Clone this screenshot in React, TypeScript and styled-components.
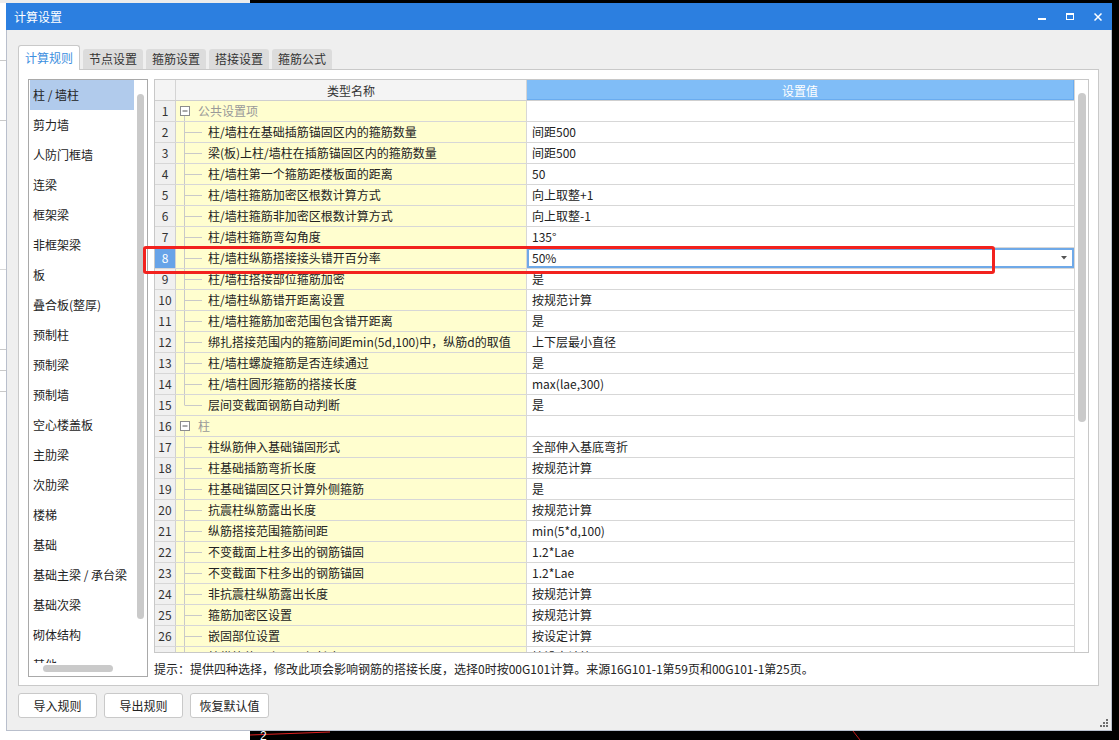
import styled, { createGlobalStyle } from "styled-components";

const GlobalStyle = createGlobalStyle`
  html, body {
    margin: 0;
    padding: 0;
    background: #000;
  }
  body {
    font-family: "Noto Sans CJK SC", "Microsoft YaHei", sans-serif;
    font-size: 12px;
    color: #222;
  }
  * {
    box-sizing: border-box;
  }
`;

const Desktop = styled.div`
  position: relative;
  width: 1119px;
  height: 740px;
  overflow: hidden;
  background: #000;
`;

const BackApp = styled.div`
  position: absolute;
  left: 0;
  top: 0;
  width: 250px;
  height: 740px;
  background: #fff;
  border-top: 3px solid #ececec;
`;

const BackLine = styled.div<{ $top: number; $color?: string }>`
  position: absolute;
  left: 0;
  width: 6px;
  top: ${(p) => p.$top}px;
  height: 1px;
  background: ${(p) => p.$color || "#c9c9c9"};
`;

const CadCanvas = styled.svg`
  position: absolute;
  left: 250px;
  top: 725px;
`;

const Dialog = styled.div`
  position: absolute;
  left: 6px;
  top: 3px;
  width: 1106px;
  height: 728px;
  display: flex;
  flex-direction: column;
`;

const TitleBar = styled.div`
  height: 27px;
  background: #2c7fe0;
  color: #fff;
  display: flex;
  align-items: center;
  padding-left: 8px;
  font-size: 12px;
`;

const TitleText = styled.div`
  flex: 1;
  line-height: 27px;
`;

const WinButton = styled.div`
  width: 28px;
  height: 27px;
  display: flex;
  align-items: center;
  justify-content: center;
`;

const Body = styled.div`
  position: relative;
  flex: 1;
  background: #efefef;
  border: 1px solid #b9bfcc;
  border-top: none;
  padding: 15px 12px 12px 11px;
  display: flex;
  flex-direction: column;
`;

const TabStrip = styled.div`
  display: flex;
  align-items: flex-end;
  gap: 3px;
  height: 24px;
  position: relative;
  z-index: 1;
`;

const Tab = styled.div<{ $active?: boolean }>`
  width: ${(p) => (p.$active ? 62 : 60)}px;
  height: ${(p) => (p.$active ? 25 : 20)}px;
  margin-bottom: ${(p) => (p.$active ? -1 : 0)}px;
  background: ${(p) => (p.$active ? "#fff" : "#dcdcdc")};
  color: ${(p) => (p.$active ? "#3d8fe0" : "#333")};
  border: ${(p) => (p.$active ? "1px solid #c9c9c9" : "none")};
  border-bottom: none;
  border-radius: 3px 3px 0 0;
  display: flex;
  align-items: center;
  justify-content: center;
  line-height: 18px;
`;

const Panel = styled.div`
  height: 617px;
  background: #fff;
  border: 1px solid #c9c9c9;
  padding: 9px 9px 8px 9px;
  display: flex;
  align-items: flex-start;
  gap: 6px;
`;

const List = styled.div`
  width: 120px;
  height: 598px;
  border: 1px solid #a9a9a9;
  display: flex;
  flex-direction: column;
  background: #fff;
`;

const ListBody = styled.div`
  flex: 1;
  min-height: 0;
  display: flex;
`;

const ListItems = styled.div`
  flex: 1;
  overflow: hidden;
  padding-left: 1px;
`;

const ListItem = styled.div<{ $selected?: boolean }>`
  height: 30px;
  line-height: 30px;
  padding-left: 3px;
  white-space: nowrap;
  background: ${(p) => (p.$selected ? "#b1cbec" : "transparent")};
`;

const VScroll = styled.div<{ $pad: number }>`
  width: 13px;
  padding: ${(p) => p.$pad}px 0 0 3px;
`;

const VThumb = styled.div<{ $w: number; $h: number }>`
  width: ${(p) => p.$w}px;
  height: ${(p) => p.$h}px;
  border-radius: 4px;
  background: #cacaca;
`;

const HScroll = styled.div`
  height: 13px;
  padding: 2px 0 0 14px;
`;

const HThumb = styled.div`
  width: 70px;
  height: 7px;
  border-radius: 4px;
  background: #cacaca;
`;

const TableCol = styled.div`
  width: 935px;
  display: flex;
  flex-direction: column;
`;

const Table = styled.div`
  height: 574px;
  border: 1px solid #c8c8c8;
  display: flex;
`;

const Grid = styled.div`
  flex: 1;
  overflow: hidden;
  display: flex;
  flex-direction: column;
`;

const HeaderRow = styled.div`
  flex: none;
  display: grid;
  grid-template-columns: 21px 351px 1fr;
  height: 21px;
  border-bottom: 1px solid #cfcfcf;
`;

const HeadCell = styled.div<{ $blue?: boolean }>`
  display: flex;
  align-items: center;
  justify-content: center;
  background: ${(p) => (p.$blue ? "#80bdf7" : "#f4f4f4")};
  color: ${(p) => (p.$blue ? "#fff" : "#333")};
  border-right: 1px solid ${(p) => (p.$blue ? "#6aacef" : "#d4d4d4")};
  box-shadow: ${(p) => (p.$blue ? "inset 0 -1px 0 #6aacef" : "none")};
`;

const Row = styled.div`
  flex: none;
  display: grid;
  grid-template-columns: 21px 351px 1fr;
  height: 21px;
  border-bottom: 1px solid #d7d7d7;
`;

const NumCell = styled.div<{ $selected?: boolean }>`
  background: ${(p) => (p.$selected ? "#67a3e8" : "#f0f0f0")};
  color: ${(p) => (p.$selected ? "#fff" : "#333")};
  border-right: 1px solid #d0d0d0;
  text-align: center;
  line-height: 20px;
`;

const NameCell = styled.div`
  display: flex;
  align-items: center;
  background: #fffecf;
  border-right: 1px solid #d7d7d7;
  overflow: hidden;
`;

const NameText = styled.span<{ $section?: boolean }>`
  color: ${(p) => (p.$section ? "#999" : "#222")};
  white-space: nowrap;
  line-height: 20px;
`;

const ValueCell = styled.div<{ $editing?: boolean }>`
  display: flex;
  align-items: center;
  justify-content: space-between;
  padding: 0 7px 0 5px;
  line-height: 20px;
  white-space: nowrap;
  background: #fff;
  box-shadow: ${(p) => (p.$editing ? "inset 0 0 0 2px #6fa9e8" : "none")};
`;

const TScroll = styled.div`
  width: 14px;
  border-left: 1px solid #d6d6d6;
  padding: 13px 0 0 3px;
`;

const Hint = styled.div`
  margin-top: 8px;
  line-height: 16px;
  white-space: nowrap;
  color: #222;
`;

const Footer = styled.div`
  display: flex;
  gap: 7px;
  margin-top: 7px;
`;

const Button = styled.button`
  width: 79px;
  height: 25px;
  padding: 0;
  background: #fff;
  border: 1px solid #c9c9c9;
  border-radius: 3px;
  font-family: inherit;
  font-size: 12px;
  color: #222;
`;

const Grip = styled.svg`
  position: absolute;
  right: 3px;
  bottom: 3px;
`;

const Highlight = styled.div`
  position: absolute;
  left: 143px;
  top: 246px;
  width: 852px;
  height: 28px;
  border: 3px solid #f2221e;
  border-radius: 3px;
  pointer-events: none;
`;

type Item = {
  name: string;
  value?: string;
  section?: boolean;
  last?: boolean;
};

const items: Item[] = [
  { name: "公共设置项", section: true },
  { name: "柱/墙柱在基础插筋锚固区内的箍筋数量", value: "间距500" },
  { name: "梁(板)上柱/墙柱在插筋锚固区内的箍筋数量", value: "间距500" },
  { name: "柱/墙柱第一个箍筋距楼板面的距离", value: "50" },
  { name: "柱/墙柱箍筋加密区根数计算方式", value: "向上取整+1" },
  { name: "柱/墙柱箍筋非加密区根数计算方式", value: "向上取整-1" },
  { name: "柱/墙柱箍筋弯勾角度", value: "135°" },
  { name: "柱/墙柱纵筋搭接接头错开百分率", value: "50%" },
  { name: "柱/墙柱搭接部位箍筋加密", value: "是" },
  { name: "柱/墙柱纵筋错开距离设置", value: "按规范计算" },
  { name: "柱/墙柱箍筋加密范围包含错开距离", value: "是" },
  { name: "绑扎搭接范围内的箍筋间距min(5d,100)中，纵筋d的取值", value: "上下层最小直径" },
  { name: "柱/墙柱螺旋箍筋是否连续通过", value: "是" },
  { name: "柱/墙柱圆形箍筋的搭接长度", value: "max(lae,300)" },
  { name: "层间变截面钢筋自动判断", value: "是", last: true },
  { name: "柱", section: true },
  { name: "柱纵筋伸入基础锚固形式", value: "全部伸入基底弯折" },
  { name: "柱基础插筋弯折长度", value: "按规范计算" },
  { name: "柱基础锚固区只计算外侧箍筋", value: "是" },
  { name: "抗震柱纵筋露出长度", value: "按规范计算" },
  { name: "纵筋搭接范围箍筋间距", value: "min(5*d,100)" },
  { name: "不变截面上柱多出的钢筋锚固", value: "1.2*Lae" },
  { name: "不变截面下柱多出的钢筋锚固", value: "1.2*Lae" },
  { name: "非抗震柱纵筋露出长度", value: "按规范计算" },
  { name: "箍筋加密区设置", value: "按规范计算" },
  { name: "嵌固部位设置", value: "按设定计算" },
  { name: "柱纵筋伸入上层顶部长度", value: "按设定计算" },
];

const components = [
  "柱 / 墙柱",
  "剪力墙",
  "人防门框墙",
  "连梁",
  "框架梁",
  "非框架梁",
  "板",
  "叠合板(整厚)",
  "预制柱",
  "预制梁",
  "预制墙",
  "空心楼盖板",
  "主肋梁",
  "次肋梁",
  "楼梯",
  "基础",
  "基础主梁 / 承台梁",
  "基础次梁",
  "砌体结构",
  "其他",
];

const tabs = ["计算规则", "节点设置", "箍筋设置", "搭接设置", "箍筋公式"];

function TreeBranch({ last }: { last?: boolean }) {
  return (
    <svg width="32" height="20" style={{ flex: "none" }}>
      <line x1="8.5" y1="0" x2="8.5" y2={last ? 10.5 : 20} stroke="#c9c9c9" />
      <line x1="9" y1="10.5" x2="26" y2="10.5" stroke="#c9c9c9" />
    </svg>
  );
}

function TreeToggle() {
  return (
    <svg width="22" height="20" style={{ flex: "none" }}>
      <rect x="4.5" y="5.5" width="9" height="9" fill="#fff" stroke="#8c8c8c" />
      <line x1="6.5" y1="10" x2="11.5" y2="10" stroke="#555" />
      <line x1="8.5" y1="15" x2="8.5" y2="20" stroke="#c9c9c9" />
    </svg>
  );
}

export default function App() {
  return (
    <>
      <GlobalStyle />
      <Desktop>
        <BackApp>
          <BackLine $top={57} />
          <BackLine $top={117} />
          <BackLine $top={266} $color="#d8d8d8" />
          <BackLine $top={346} />
          <BackLine $top={367} />
          <BackLine $top={388} />
        </BackApp>
        <CadCanvas width="869" height="15">
          <line x1="0" y1="10" x2="80" y2="7" stroke="#e02020" />
          <line x1="603" y1="6" x2="610" y2="15" stroke="#c01818" />
          <text x="10" y="15" fill="#fff" fontSize="12" fontFamily="Liberation Sans, sans-serif">
            2
          </text>
        </CadCanvas>
        <Dialog>
          <TitleBar>
            <TitleText>计算设置</TitleText>
            <WinButton>
              <svg width="8" height="8">
                <rect x="0" y="5" width="8" height="2" fill="#fff" />
              </svg>
            </WinButton>
            <WinButton>
              <svg width="8" height="7">
                <rect x="0.5" y="0.5" width="7" height="6" fill="none" stroke="#fff" />
                <rect x="0" y="0" width="8" height="2" fill="#fff" />
              </svg>
            </WinButton>
            <WinButton>
              <svg width="8" height="8">
                <path d="M0.5 0.5 L7.5 7.5 M7.5 0.5 L0.5 7.5" stroke="#fff" strokeWidth="1.5" />
              </svg>
            </WinButton>
          </TitleBar>
          <Body>
            <TabStrip>
              {tabs.map((t, i) => (
                <Tab key={t} $active={i === 0}>
                  {t}
                </Tab>
              ))}
            </TabStrip>
            <Panel>
              <List>
                <ListBody>
                  <ListItems>
                    {components.map((c, i) => (
                      <ListItem key={c} $selected={i === 0}>
                        {c}
                      </ListItem>
                    ))}
                  </ListItems>
                  <VScroll $pad={14}>
                    <VThumb $w={7} $h={525} />
                  </VScroll>
                </ListBody>
                <HScroll>
                  <HThumb />
                </HScroll>
              </List>
              <TableCol>
                <Table>
                  <Grid>
                    <HeaderRow>
                      <HeadCell />
                      <HeadCell>类型名称</HeadCell>
                      <HeadCell $blue>设置值</HeadCell>
                    </HeaderRow>
                    {items.map((it, i) => (
                      <Row key={i}>
                        <NumCell $selected={i === 7}>{i + 1}</NumCell>
                        <NameCell>
                          {it.section ? <TreeToggle /> : <TreeBranch last={it.last} />}
                          <NameText $section={it.section}>{it.name}</NameText>
                        </NameCell>
                        <ValueCell $editing={i === 7}>
                          <span>{it.value}</span>
                          {i === 7 && (
                            <svg width="6" height="4">
                              <path d="M0 0 H6 L3 3.5 Z" fill="#555" />
                            </svg>
                          )}
                        </ValueCell>
                      </Row>
                    ))}
                  </Grid>
                  <TScroll>
                    <VThumb $w={8} $h={329} />
                  </TScroll>
                </Table>
                <Hint>
                  提示：提供四种选择，修改此项会影响钢筋的搭接长度，选择0时按00G101计算。来源16G101-1第59页和00G101-1第25页。
                </Hint>
              </TableCol>
            </Panel>
            <Footer>
              <Button>导入规则</Button>
              <Button>导出规则</Button>
              <Button>恢复默认值</Button>
            </Footer>
            <Grip width="8" height="8">
              <rect x="6" y="0" width="2" height="2" fill="#6f6f6f" />
              <rect x="3" y="3" width="2" height="2" fill="#6f6f6f" />
              <rect x="6" y="3" width="2" height="2" fill="#6f6f6f" />
              <rect x="0" y="6" width="2" height="2" fill="#6f6f6f" />
              <rect x="3" y="6" width="2" height="2" fill="#6f6f6f" />
              <rect x="6" y="6" width="2" height="2" fill="#6f6f6f" />
            </Grip>
          </Body>
        </Dialog>
        <Highlight />
      </Desktop>
    </>
  );
}
